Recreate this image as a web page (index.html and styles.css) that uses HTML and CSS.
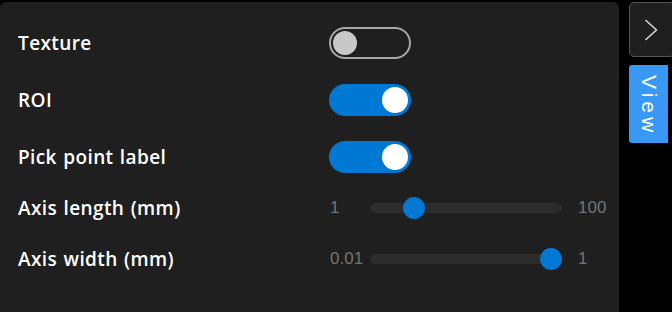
FILE: index.html
```html
<!DOCTYPE html>
<html>
<head>
<meta charset="utf-8">
<link rel="stylesheet" href="styles.css">
</head>
<body>
<div class="app">
  <div class="panel">
    <div class="row toggle-row">
      <span class="label">Texture</span>
      <span class="switch off"><span class="knob"></span></span>
    </div>
    <div class="row toggle-row">
      <span class="label">ROI</span>
      <span class="switch on"><span class="knob"></span></span>
    </div>
    <div class="row toggle-row">
      <span class="label">Pick point label</span>
      <span class="switch on"><span class="knob"></span></span>
    </div>
    <div class="row slider-row first">
      <span class="label">Axis length (mm)</span>
      <div class="slider">
        <span class="min">1</span>
        <span class="track"><span class="thumb" style="--p: 0.194"></span></span>
        <span class="max">100</span>
      </div>
    </div>
    <div class="row slider-row">
      <span class="label">Axis width (mm)</span>
      <div class="slider">
        <span class="min">0.01</span>
        <span class="track"><span class="thumb" style="--p: 1"></span></span>
        <span class="max">1</span>
      </div>
    </div>
  </div>
  <div class="side">
    <button class="collapse" type="button" aria-label="Collapse">
      <svg width="14" height="22" viewBox="0 0 14 22"><path d="M2 1.5 L12.5 11 L2 20.5" fill="none" stroke="#d8d8d8" stroke-width="1.6" stroke-linecap="round" stroke-linejoin="round"/></svg>
    </button>
    <div class="tab">View</div>
  </div>
</div>
</body>
</html>
```

FILE: styles.css
```css
html, body {
  margin: 0;
  padding: 0;
  background: #000;
  width: 672px;
  height: 312px;
  overflow: hidden;
}

.app {
  display: flex;
  gap: 10px;
  padding-top: 2px;
}

.panel {
  width: 619px;
  height: 318px;
  background: #1f1f1f;
  border-radius: 6px;
  padding: 12px 0 0 18px;
  box-sizing: border-box;
  display: flex;
  flex-direction: column;
}

.row {
  display: grid;
  grid-template-columns: 311px 1fr;
  align-items: center;
}

.toggle-row { height: 57px; }
.slider-row { height: 51px; }
.slider-row.first { margin-top: -3px; }

.label {
  font-family: "Open Sans", "Noto Sans", sans-serif;
  font-weight: 600;
  font-size: 19px;
  color: #ffffff;
  letter-spacing: 0.4px;
  word-spacing: 1px;
}

.switch {
  width: 82px;
  height: 32px;
  border-radius: 16px;
  box-sizing: border-box;
  display: flex;
  align-items: center;
  padding: 0 3px;
}

.switch.off {
  border: 2px solid #a8a8a8;
  background: #1f1f1f;
  justify-content: flex-start;
  padding: 0 2px;
}

.switch.off .knob {
  width: 24px;
  height: 24px;
  background: #c8c8c8;
}

.switch.on {
  background: #0078d4;
  justify-content: flex-end;
}

.switch.on .knob {
  width: 26px;
  height: 26px;
  background: #ffffff;
}

.knob {
  display: block;
  border-radius: 50%;
}

.slider {
  display: flex;
  align-items: center;
  font-family: "Liberation Sans", Arial, sans-serif;
  font-size: 17px;
  color: #747474;
}

.slider .min {
  width: 40px;
  margin-left: 1px;
}

.slider .max {
  margin-left: 16px;
}

.track {
  position: relative;
  width: 192px;
  height: 10px;
  border-radius: 5px;
  background: #2c2c2c;
}

.thumb {
  position: absolute;
  top: 50%;
  left: calc(11px + (100% - 22px) * var(--p));
  width: 22px;
  height: 22px;
  border-radius: 50%;
  background: #0078d4;
  transform: translate(-50%, -50%);
}

.side {
  display: flex;
  flex-direction: column;
  gap: 8px;
  width: 43px;
}

.collapse {
  width: 46px;
  height: 55px;
  background: #1f1f1f;
  border: 1px solid #555;
  border-radius: 5px;
  display: flex;
  align-items: center;
  justify-content: flex-start;
  padding: 0 0 0 14px;
  box-sizing: border-box;
  cursor: pointer;
}

.tab {
  width: 39px;
  height: 78px;
  background: #3a98f5;
  border-radius: 3px 0 0 3px;
  color: #fff;
  writing-mode: vertical-rl;
  font-family: "Liberation Sans", Arial, sans-serif;
  font-size: 21px;
  letter-spacing: 4px;
  display: flex;
  align-items: center;
  justify-content: center;
  box-sizing: border-box;
  padding-top: 4px;
}
```
